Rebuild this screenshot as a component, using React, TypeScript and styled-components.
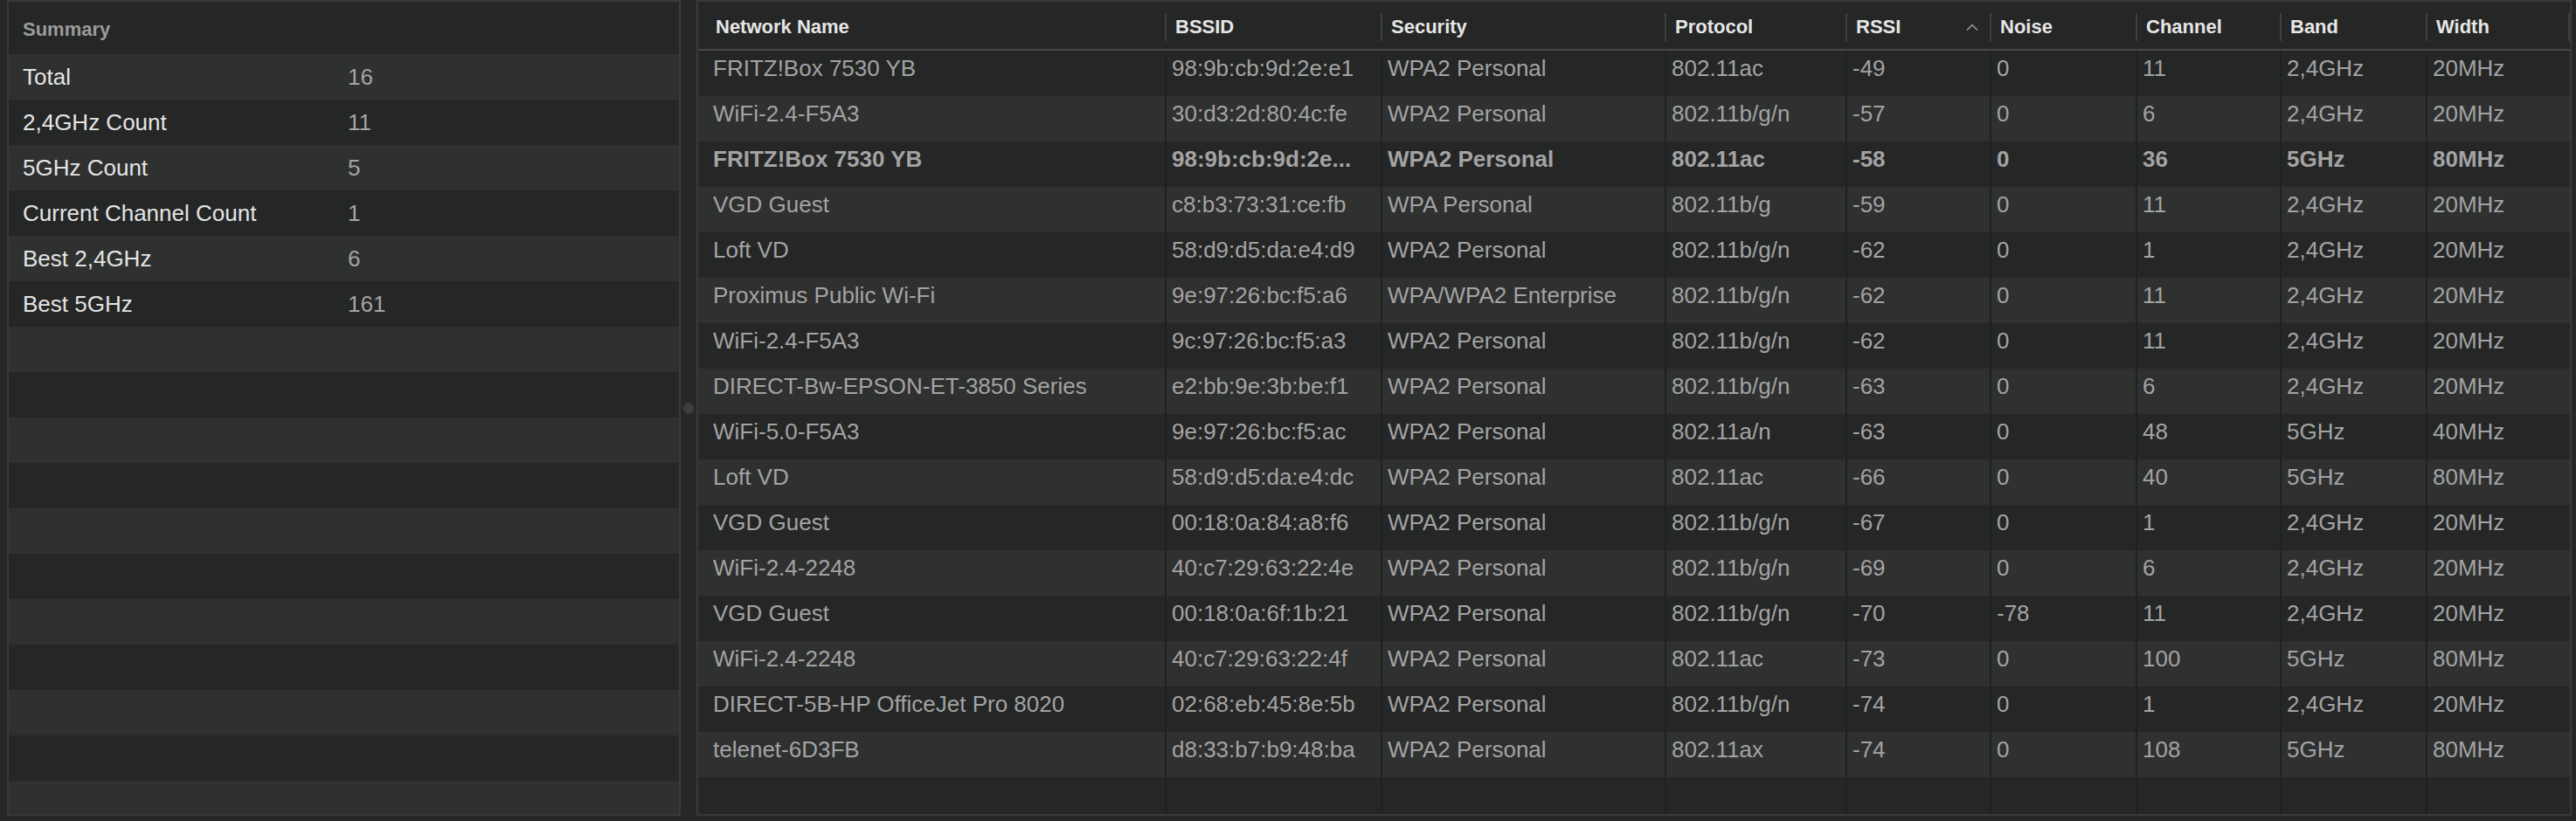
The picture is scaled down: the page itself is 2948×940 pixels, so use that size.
import React from "react";
import styled, { createGlobalStyle } from "styled-components";

const GlobalStyle = createGlobalStyle`
  html, body {
    margin: 0;
    padding: 0;
    background: #262727;
  }
  body {
    font-family: "Liberation Sans", Arial, sans-serif;
  }
`;

type Network = {
  name: string;
  bssid: string;
  security: string;
  protocol: string;
  rssi: number;
  noise: number;
  channel: number;
  band: string;
  width: string;
  current?: boolean;
};

const networks: Network[] = [
  { name: "FRITZ!Box 7530 YB", bssid: "98:9b:cb:9d:2e:e1", security: "WPA2 Personal", protocol: "802.11ac", rssi: -49, noise: 0, channel: 11, band: "2,4GHz", width: "20MHz" },
  { name: "WiFi-2.4-F5A3", bssid: "30:d3:2d:80:4c:fe", security: "WPA2 Personal", protocol: "802.11b/g/n", rssi: -57, noise: 0, channel: 6, band: "2,4GHz", width: "20MHz" },
  { name: "FRITZ!Box 7530 YB", bssid: "98:9b:cb:9d:2e...", security: "WPA2 Personal", protocol: "802.11ac", rssi: -58, noise: 0, channel: 36, band: "5GHz", width: "80MHz", current: true },
  { name: "VGD Guest", bssid: "c8:b3:73:31:ce:fb", security: "WPA Personal", protocol: "802.11b/g", rssi: -59, noise: 0, channel: 11, band: "2,4GHz", width: "20MHz" },
  { name: "Loft VD", bssid: "58:d9:d5:da:e4:d9", security: "WPA2 Personal", protocol: "802.11b/g/n", rssi: -62, noise: 0, channel: 1, band: "2,4GHz", width: "20MHz" },
  { name: "Proximus Public Wi-Fi", bssid: "9e:97:26:bc:f5:a6", security: "WPA/WPA2 Enterprise", protocol: "802.11b/g/n", rssi: -62, noise: 0, channel: 11, band: "2,4GHz", width: "20MHz" },
  { name: "WiFi-2.4-F5A3", bssid: "9c:97:26:bc:f5:a3", security: "WPA2 Personal", protocol: "802.11b/g/n", rssi: -62, noise: 0, channel: 11, band: "2,4GHz", width: "20MHz" },
  { name: "DIRECT-Bw-EPSON-ET-3850 Series", bssid: "e2:bb:9e:3b:be:f1", security: "WPA2 Personal", protocol: "802.11b/g/n", rssi: -63, noise: 0, channel: 6, band: "2,4GHz", width: "20MHz" },
  { name: "WiFi-5.0-F5A3", bssid: "9e:97:26:bc:f5:ac", security: "WPA2 Personal", protocol: "802.11a/n", rssi: -63, noise: 0, channel: 48, band: "5GHz", width: "40MHz" },
  { name: "Loft VD", bssid: "58:d9:d5:da:e4:dc", security: "WPA2 Personal", protocol: "802.11ac", rssi: -66, noise: 0, channel: 40, band: "5GHz", width: "80MHz" },
  { name: "VGD Guest", bssid: "00:18:0a:84:a8:f6", security: "WPA2 Personal", protocol: "802.11b/g/n", rssi: -67, noise: 0, channel: 1, band: "2,4GHz", width: "20MHz" },
  { name: "WiFi-2.4-2248", bssid: "40:c7:29:63:22:4e", security: "WPA2 Personal", protocol: "802.11b/g/n", rssi: -69, noise: 0, channel: 6, band: "2,4GHz", width: "20MHz" },
  { name: "VGD Guest", bssid: "00:18:0a:6f:1b:21", security: "WPA2 Personal", protocol: "802.11b/g/n", rssi: -70, noise: -78, channel: 11, band: "2,4GHz", width: "20MHz" },
  { name: "WiFi-2.4-2248", bssid: "40:c7:29:63:22:4f", security: "WPA2 Personal", protocol: "802.11ac", rssi: -73, noise: 0, channel: 100, band: "5GHz", width: "80MHz" },
  { name: "DIRECT-5B-HP OfficeJet Pro 8020", bssid: "02:68:eb:45:8e:5b", security: "WPA2 Personal", protocol: "802.11b/g/n", rssi: -74, noise: 0, channel: 1, band: "2,4GHz", width: "20MHz" },
  { name: "telenet-6D3FB", bssid: "d8:33:b7:b9:48:ba", security: "WPA2 Personal", protocol: "802.11ax", rssi: -74, noise: 0, channel: 108, band: "5GHz", width: "80MHz" },
];

const summary: [string, string][] = [
  ["Total", "16"],
  ["2,4GHz Count", "11"],
  ["5GHz Count", "5"],
  ["Current Channel Count", "1"],
  ["Best 2,4GHz", "6"],
  ["Best 5GHz", "161"],
];

const columns = ["Network Name", "BSSID", "Security", "Protocol", "RSSI", "Noise", "Channel", "Band", "Width"];
const COLS = "536px 247px 325px 207px 165px 167px 165px 167px 163px";

const ROW_DARK = "#252626";
const ROW_LIGHT = "#2f3030";

const Window = styled.div`
  display: flex;
  height: 940px;
  box-sizing: border-box;
  padding: 0 5px 6px 8px;
  background: #262727;
`;

const Panel = styled.div`
  display: flex;
  flex-direction: column;
  box-sizing: border-box;
  border: 2px solid #393a3a;
  background: ${ROW_DARK};
  overflow: hidden;
`;

const SummaryPanel = styled(Panel)`
  width: 771px;
  flex: none;
`;

const NetworksPanel = styled(Panel)`
  flex: 1;
`;

const SummaryTitle = styled.div`
  flex: none;
  height: 60px;
  box-sizing: border-box;
  padding: 19px 16px 0;
  font-size: 22px;
  line-height: 26px;
  font-weight: 700;
  color: #9b9b9b;
`;

const SummaryRow = styled.div<{ $light: boolean }>`
  flex: none;
  display: grid;
  grid-template-columns: 372px 1fr;
  align-items: center;
  height: 52px;
  padding-left: 16px;
  font-size: 26px;
  line-height: 30px;
  background: ${(p) => (p.$light ? ROW_LIGHT : ROW_DARK)};
`;

const SummaryLabel = styled.span`
  color: #e4e4e4;
`;

const SummaryValue = styled.span`
  color: #a4a4a4;
`;

const Splitter = styled.div`
  width: 18px;
  flex: none;
  display: flex;
  align-items: center;
  justify-content: center;
`;

const Grip = styled.div`
  width: 12px;
  height: 13px;
  border-radius: 50%;
  background: #3c3d3d;
`;

const HeaderRow = styled.div`
  flex: none;
  display: grid;
  grid-template-columns: ${COLS};
  height: 56px;
  box-sizing: border-box;
  border-bottom: 2px solid #464747;
  background: ${ROW_DARK};
`;

const HeaderCell = styled.div<{ $first?: boolean }>`
  display: flex;
  align-items: center;
  padding: 3px 0 0 ${(p) => (p.$first ? 20 : 10)}px;
  min-width: 0;
`;

const HeaderLabel = styled.span`
  flex: 1;
  font-size: 22px;
  line-height: 26px;
  font-weight: 700;
  color: #e6e6e6;
  white-space: nowrap;
`;

const HeaderSep = styled.div`
  width: 2px;
  height: 32px;
  flex: none;
  background: #3e3f3f;
`;

const SortCaret = styled.svg`
  flex: none;
  width: 14px;
  height: 8px;
  margin-right: 13px;
`;

const Row = styled.div<{ $light: boolean }>`
  flex: none;
  display: grid;
  grid-template-columns: ${COLS};
  height: 52px;
  background: ${(p) => (p.$light ? ROW_LIGHT : ROW_DARK)};
`;

const Cell = styled.div<{ $first?: boolean; $bold?: boolean; $last?: boolean }>`
  min-width: 0;
  box-sizing: border-box;
  padding: 5px 6px 0 ${(p) => (p.$first ? 17 : 6)}px;
  border-right: ${(p) => (p.$last ? "none" : "2px solid #1f2020")};
  font-size: 26px;
  line-height: 30px;
  font-weight: ${(p) => (p.$bold ? 700 : 400)};
  color: #a3a3a3;
  white-space: nowrap;
  overflow: hidden;
  text-overflow: ellipsis;
`;

const Filler = styled.div`
  flex: 1;
  display: grid;
  grid-template-columns: ${COLS};
  background: ${ROW_DARK};
`;

function cellsOf(n: Network): string[] {
  return [
    n.name,
    n.bssid,
    n.security,
    n.protocol,
    String(n.rssi),
    String(n.noise),
    String(n.channel),
    n.band,
    n.width,
  ];
}

export default function App() {
  const emptyRows = 11;

  return (
    <>
      <GlobalStyle />
      <Window>
        <SummaryPanel>
          <SummaryTitle>Summary</SummaryTitle>
          {summary.map(([label, value], i) => (
            <SummaryRow key={label} $light={i % 2 === 0}>
              <SummaryLabel>{label}</SummaryLabel>
              <SummaryValue>{value}</SummaryValue>
            </SummaryRow>
          ))}
          {Array.from({ length: emptyRows }).map((_, i) => (
            <SummaryRow key={"e" + i} $light={(summary.length + i) % 2 === 0} />
          ))}
        </SummaryPanel>

        <Splitter>
          <Grip />
        </Splitter>

        <NetworksPanel>
          <HeaderRow>
            {columns.map((c, i) => (
              <HeaderCell key={c} $first={i === 0}>
                <HeaderLabel>{c}</HeaderLabel>
                {c === "RSSI" && (
                  <SortCaret viewBox="0 0 14 8">
                    <polyline
                      points="1.5,7 7,1.5 12.5,7"
                      fill="none"
                      stroke="#9a9a9a"
                      strokeWidth="1.6"
                      strokeLinecap="round"
                      strokeLinejoin="round"
                    />
                  </SortCaret>
                )}
                <HeaderSep />
              </HeaderCell>
            ))}
          </HeaderRow>

          {networks.map((n, r) => (
            <Row key={n.bssid + r} $light={r % 2 === 1}>
              {cellsOf(n).map((v, i) => (
                <Cell
                  key={i}
                  $first={i === 0}
                  $last={i === columns.length - 1}
                  $bold={n.current}
                >
                  {v}
                </Cell>
              ))}
            </Row>
          ))}

          <Filler>
            {columns.map((c, i) => (
              <Cell key={c} $last={i === columns.length - 1} />
            ))}
          </Filler>
        </NetworksPanel>
      </Window>
    </>
  );
}
